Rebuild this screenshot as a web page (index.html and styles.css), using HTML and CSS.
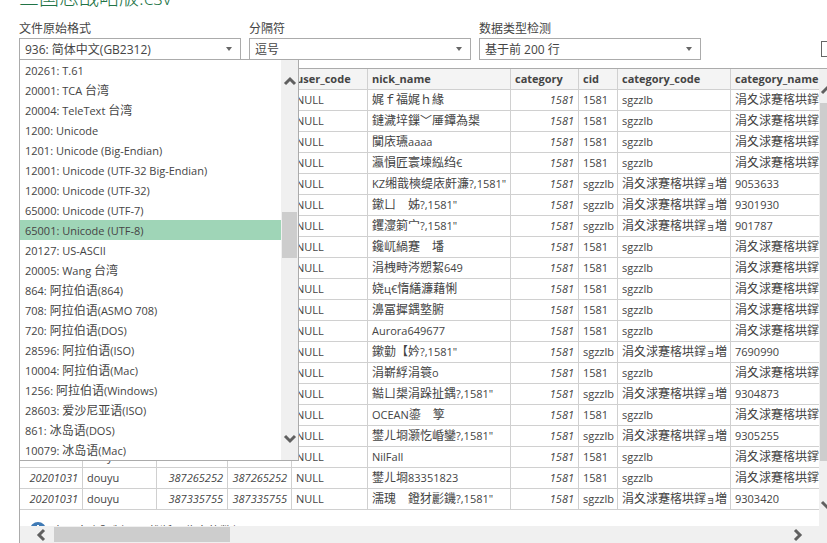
FILE: index.html
```html
<!DOCTYPE html>
<html lang="zh-CN">
<head>
<meta charset="utf-8">
<title>三国志战略版.csv</title>
<link rel="stylesheet" href="styles.css">
</head>
<body>
<header class="title"><h1>三国志战略版.csv</h1></header>
<form class="options">
  <div class="field">
    <label for="origin">文件原始格式</label>
    <div class="picker">
      <select id="origin"><option>936: 简体中文(GB2312)</option></select>
      <div class="popup">
        <ul class="list">
          <li>20261: T.61</li>
          <li>20001: TCA <span class="cjk">台湾</span></li>
          <li>20004: TeleText <span class="cjk">台湾</span></li>
          <li>1200: Unicode</li>
          <li>1201: Unicode (Big-Endian)</li>
          <li>12001: Unicode (UTF-32 Big-Endian)</li>
          <li>12000: Unicode (UTF-32)</li>
          <li>65000: Unicode (UTF-7)</li>
          <li class="active">65001: Unicode (UTF-8)</li>
          <li>20127: US-ASCII</li>
          <li>20005: Wang <span class="cjk">台湾</span></li>
          <li>864: <span class="cjk">阿拉伯语</span>(864)</li>
          <li>708: <span class="cjk">阿拉伯语</span>(ASMO 708)</li>
          <li>720: <span class="cjk">阿拉伯语</span>(DOS)</li>
          <li>28596: <span class="cjk">阿拉伯语</span>(ISO)</li>
          <li>10004: <span class="cjk">阿拉伯语</span>(Mac)</li>
          <li>1256: <span class="cjk">阿拉伯语</span>(Windows)</li>
          <li>28603: <span class="cjk">爱沙尼亚语</span>(ISO)</li>
          <li>861: <span class="cjk">冰岛语</span>(DOS)</li>
          <li>10079: <span class="cjk">冰岛语</span>(Mac)</li>
        </ul>
        <div class="bar list-bar">
          <svg class="chev" viewBox="0 0 12 10" width="12" height="10"><path d="M1 8L6 3L11 8"/></svg>
          <div class="thumb"></div>
          <svg class="chev" viewBox="0 0 12 10" width="12" height="10"><path d="M1 2L6 7L11 2"/></svg>
        </div>
      </div>
    </div>
  </div>
  <div class="field">
    <label for="delimiter">分隔符</label>
    <div class="picker"><select id="delimiter"><option>逗号</option></select></div>
  </div>
  <div class="field">
    <label for="detect">数据类型检测</label>
    <div class="picker"><select id="detect"><option>基于前 200 行</option></select></div>
  </div>
  <input class="check" type="checkbox" aria-label="选项">
</form>
<main class="preview">
  <div class="body">
    <div class="content">
      <table>
        <colgroup><col class="w1"><col class="w2"><col class="w3"><col class="w4"><col class="w5"><col class="w6"><col class="w7"><col class="w8"><col class="w9"><col class="w10"></colgroup>
        <thead><tr><th></th><th></th><th></th><th></th><th>user_code</th><th>nick_name</th><th>category</th><th>cid</th><th>category_code</th><th>category_name</th></tr></thead>
        <tbody>
          <tr><td></td><td></td><td></td><td></td><td>NULL</td><td><span class="cjk">娓ｆ福娓ｈ緣</span></td><td class="num">1581</td><td>1581</td><td>sgzzlb</td><td><span class="cjk">涓夊浗蹇楁垬鐣<small>ョ</small>増</span></td></tr>
          <tr><td></td><td></td><td></td><td></td><td>NULL</td><td><span class="cjk">鏈濊垶鏁﹀厜鐔為槼</span></td><td class="num">1581</td><td>1581</td><td>sgzzlb</td><td><span class="cjk">涓夊浗蹇楁垬鐣<small>ョ</small>増</span></td></tr>
          <tr><td></td><td></td><td></td><td></td><td>NULL</td><td><span class="cjk">闃庡瓙</span>aaaa</td><td class="num">1581</td><td>1581</td><td>sgzzlb</td><td><span class="cjk">涓夊浗蹇楁垬鐣<small>ョ</small>増</span></td></tr>
          <tr><td></td><td></td><td></td><td></td><td>NULL</td><td><span class="cjk">瀛愪匠寰堜紭绉</span>€</td><td class="num">1581</td><td>1581</td><td>sgzzlb</td><td><span class="cjk">涓夊浗蹇楁垬鐣<small>ョ</small>増</span></td></tr>
          <tr><td></td><td></td><td></td><td></td><td>NULL</td><td>KZ<span class="cjk">缃戠樉缇庡皯濂</span>?,1581"</td><td class="num">1581</td><td>sgzzlb</td><td><span class="cjk">涓夊浗蹇楁垬鐣<small>ョ</small>増</span></td><td>9053633</td></tr>
          <tr><td></td><td></td><td></td><td></td><td>NULL</td><td><span class="cjk">鏉ㄩ　姊</span>?,1581"</td><td class="num">1581</td><td>sgzzlb</td><td><span class="cjk">涓夊浗蹇楁垬鐣<small>ョ</small>増</span></td><td>9301930</td></tr>
          <tr><td></td><td></td><td></td><td></td><td>NULL</td><td><span class="cjk">钁濅箣宀</span>?,1581"</td><td class="num">1581</td><td>sgzzlb</td><td><span class="cjk">涓夊浗蹇楁垬鐣<small>ョ</small>増</span></td><td>901787</td></tr>
          <tr><td></td><td></td><td></td><td></td><td>NULL</td><td><span class="cjk">鑱屼緺蹇　墦</span></td><td class="num">1581</td><td>1581</td><td>sgzzlb</td><td><span class="cjk">涓夊浗蹇楁垬鐣<small>ョ</small>増</span></td></tr>
          <tr><td></td><td></td><td></td><td></td><td>NULL</td><td><span class="cjk">涓栧畤涔愬絜</span>649</td><td class="num">1581</td><td>1581</td><td>sgzzlb</td><td><span class="cjk">涓夊浗蹇楁垬鐣<small>ョ</small>増</span></td></tr>
          <tr><td></td><td></td><td></td><td></td><td>NULL</td><td><span class="cjk">娆</span>ц€<span class="cjk">惰繕濂藉悧</span></td><td class="num">1581</td><td>1581</td><td>sgzzlb</td><td><span class="cjk">涓夊浗蹇楁垬鐣<small>ョ</small>増</span></td></tr>
          <tr><td></td><td></td><td></td><td></td><td>NULL</td><td><span class="cjk">濞冨摨鍝墪腑</span></td><td class="num">1581</td><td>1581</td><td>sgzzlb</td><td><span class="cjk">涓夊浗蹇楁垬鐣<small>ョ</small>増</span></td></tr>
          <tr><td></td><td></td><td></td><td></td><td>NULL</td><td>Aurora649677</td><td class="num">1581</td><td>1581</td><td>sgzzlb</td><td><span class="cjk">涓夊浗蹇楁垬鐣<small>ョ</small>増</span></td></tr>
          <tr><td></td><td></td><td></td><td></td><td>NULL</td><td><span class="cjk">鏉勭【妗</span>?,1581"</td><td class="num">1581</td><td>sgzzlb</td><td><span class="cjk">涓夊浗蹇楁垬鐣<small>ョ</small>増</span></td><td>7690990</td></tr>
          <tr><td></td><td></td><td></td><td></td><td>NULL</td><td><span class="cjk">涓嶄綒涓簑</span>o</td><td class="num">1581</td><td>1581</td><td>sgzzlb</td><td><span class="cjk">涓夊浗蹇楁垬鐣<small>ョ</small>増</span></td></tr>
          <tr><td></td><td></td><td></td><td></td><td>NULL</td><td><span class="cjk">鐑ㄩ槼涓跺扯鍝</span>?,1581"</td><td class="num">1581</td><td>sgzzlb</td><td><span class="cjk">涓夊浗蹇楁垬鐣<small>ョ</small>増</span></td><td>9304873</td></tr>
          <tr><td></td><td></td><td></td><td></td><td>NULL</td><td>OCEAN<span class="cjk">鎏　箰</span></td><td class="num">1581</td><td>1581</td><td>sgzzlb</td><td><span class="cjk">涓夊浗蹇楁垬鐣<small>ョ</small>増</span></td></tr>
          <tr><td></td><td></td><td></td><td></td><td>NULL</td><td><span class="cjk">鐢ㄦ埛灏忔崏鑾</span>?,1581"</td><td class="num">1581</td><td>sgzzlb</td><td><span class="cjk">涓夊浗蹇楁垬鐣<small>ョ</small>増</span></td><td>9305255</td></tr>
          <tr><td></td><td>douyu</td><td></td><td></td><td>NULL</td><td>NilFall</td><td class="num">1581</td><td>1581</td><td>sgzzlb</td><td><span class="cjk">涓夊浗蹇楁垬鐣<small>ョ</small>増</span></td></tr>
          <tr><td class="num">20201031</td><td>douyu</td><td class="num">387265252</td><td class="num">387265252</td><td>NULL</td><td><span class="cjk">鐢ㄦ埛</span>83351823</td><td class="num">1581</td><td>1581</td><td>sgzzlb</td><td><span class="cjk">涓夊浗蹇楁垬鐣<small>ョ</small>増</span></td></tr>
          <tr><td class="num">20201031</td><td>douyu</td><td class="num">387335755</td><td class="num">387335755</td><td>NULL</td><td><span class="cjk">濡瑰　鐙犲彲鐖</span>?,1581"</td><td class="num">1581</td><td>sgzzlb</td><td><span class="cjk">涓夊浗蹇楁垬鐣<small>ョ</small>増</span></td><td>9303420</td></tr>
        </tbody>
      </table>
      <p class="note">
        <svg viewBox="0 0 16 16" width="16" height="16"><circle cx="8" cy="8" r="8" fill="#3f7ab5"/><path d="M7 3h2v2H7zM7 6h2v7H7z" fill="#fff"/></svg>
        <span>由于大小限制，已截断预览中的数据。</span>
      </p>
    </div>
    <div class="bar side-bar">
      <svg class="chev" viewBox="0 0 12 10" width="12" height="10"><path d="M1 8L6 3L11 8"/></svg>
      <div class="thumb"></div>
      <svg class="chev" viewBox="0 0 12 10" width="12" height="10"><path d="M1 2L6 7L11 2"/></svg>
    </div>
  </div>
  <div class="bar bottom-bar">
    <svg class="chev" viewBox="0 0 10 12" width="10" height="12"><path d="M8 1L3 6L8 11"/></svg>
    <div class="thumb"></div>
    <svg class="chev" viewBox="0 0 10 12" width="10" height="12"><path d="M2 1L7 6L2 11"/></svg>
  </div>
</main>
</body>
</html>
```
FILE: styles.css
```css
* { box-sizing: border-box; }

body {
  margin: 0;
  height: 100vh;
  padding-left: 19px;
  overflow: hidden;
  display: flex;
  flex-direction: column;
  background: #fff;
  color: #444;
  font: 11px/20px "Open Sans", "Noto Sans CJK SC", sans-serif;
}

.cjk { font-size: 12px; line-height: 16px; }
.cjk small { font-size: 9px; }

.title {
  flex: none;
  height: 12px;
  display: flex;
  align-items: flex-end;
  overflow: hidden;
}
.title h1 {
  margin: 0;
  color: #217346;
  font: 300 20px/28px "Open Sans", "Noto Sans CJK SC", sans-serif;
}

.options {
  flex: none;
  display: flex;
  gap: 8px;
  padding-top: 8px;
}
.field { flex: none; width: 222px; }
.field label {
  display: block;
  height: 18px;
  font-size: 12px;
  line-height: 18px;
}
.picker { position: relative; }
.picker::after {
  content: "";
  position: absolute;
  right: 9px;
  top: 9px;
  border: 3px solid transparent;
  border-top: 4px solid #666;
  border-bottom: 0;
}
.picker select {
  display: block;
  width: 100%;
  height: 22px;
  padding: 1px 5px 0;
  appearance: none;
  border: 1px solid #ababab;
  border-radius: 0;
  background: #fff;
  color: inherit;
  font: 12px/20px "Open Sans", "Noto Sans CJK SC", sans-serif;
}
.check {
  flex: none;
  width: 16px;
  height: 16px;
  margin: 21px -10px 0 auto;
  appearance: none;
  border: 1px solid #666;
}

.popup {
  position: absolute;
  z-index: 2;
  top: 21px;
  left: 0;
  width: 280px;
  display: flex;
  border: 1px solid #ababab;
  background: #fff;
}
.list {
  flex: 1;
  margin: 0;
  padding: 0;
  list-style: none;
}
.list li {
  height: 20px;
  padding-left: 5px;
  line-height: 22px;
  white-space: nowrap;
}
.list .active { background: #9fd5b7; }

.bar { display: flex; background: #f0f0f0; }
.thumb { background: #cdcdcd; }
.chev { flex: none; overflow: visible; }
.chev path { fill: none; stroke: #606060; stroke-width: 3; }

.list-bar {
  width: 17px;
  flex-direction: column;
  align-items: center;
  justify-content: space-between;
  padding: 16px 0;
}
.list-bar .thumb { width: 15px; height: 46px; margin-bottom: 50px; }

.preview {
  flex: 1;
  min-height: 0;
  display: flex;
  flex-direction: column;
  border-left: 1px solid #ababab;
  padding-top: 8px;
}
.body {
  flex: 1;
  min-height: 0;
  display: flex;
  border-top: 1px solid #ababab;
}
.content { flex: 1; min-width: 0; overflow: hidden; }

table {
  width: 823px;
  table-layout: fixed;
  border-collapse: separate;
  border-spacing: 0;
}
.w1 { width: 63px; }
.w2 { width: 74px; }
.w3 { width: 71px; }
.w4 { width: 64px; }
.w5 { width: 76px; }
.w6 { width: 143px; }
.w7 { width: 68px; }
.w8 { width: 39px; }
.w9 { width: 113px; }
.w10 { width: 112px; }
th, td {
  height: 21px;
  padding: 0 4px;
  border-right: 1px solid #d0d0d0;
  border-bottom: 1px solid #d0d0d0;
  text-align: left;
  line-height: 16px;
  white-space: nowrap;
  overflow: hidden;
}
th { background: #f4f4f4; }
.num { text-align: right; font-style: italic; }

.note {
  display: flex;
  gap: 6px;
  margin: 0;
  padding: 12px 0 0 10px;
  font-size: 12px;
  line-height: 20px;
}

.side-bar {
  flex: none;
  width: 8px;
  flex-direction: column;
  padding: 16px 0 16px 2px;
}
.side-bar .thumb {
  flex: 1;
  margin: 8px 0 39px -1px;
}

.bottom-bar {
  flex: none;
  height: 17px;
  align-items: center;
  padding: 0 24px 0 16px;
}
.bottom-bar .thumb {
  width: 176px;
  height: 15px;
  margin: 0 auto 0 8px;
}
```
